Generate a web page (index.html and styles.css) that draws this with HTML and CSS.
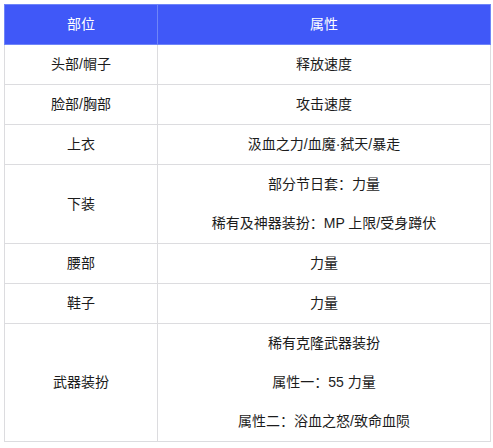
FILE: index.html
```html
<!DOCTYPE html>
<html lang="zh">
<head>
<meta charset="utf-8">
<link rel="stylesheet" href="styles.css">
</head>
<body>
<table class="gear">
  <thead>
    <tr><th class="col-part">部位</th><th class="col-attr">属性</th></tr>
  </thead>
  <tbody>
    <tr><td>头部/帽子</td><td>释放速度</td></tr>
    <tr><td>脸部/胸部</td><td>攻击速度</td></tr>
    <tr><td>上衣</td><td>汲血之力/血魔·弑天/暴走</td></tr>
    <tr><td>下装</td><td><div class="line">部分节日套：力量</div><div class="line">稀有及神器装扮：MP 上限/受身蹲伏</div></td></tr>
    <tr><td>腰部</td><td>力量</td></tr>
    <tr><td>鞋子</td><td>力量</td></tr>
    <tr class="last"><td>武器装扮</td><td><div class="line">稀有克隆武器装扮</div><div class="line">属性一：55 力量</div><div class="line">属性二：浴血之怒/致命血陨</div></td></tr>
  </tbody>
</table>
</body>
</html>
```

FILE: styles.css
```css
html, body {
  margin: 0;
  padding: 0;
  background: #ffffff;
}
body {
  padding: 4px 0 0 4px;
  font-family: "Liberation Sans", "Noto Sans CJK SC", sans-serif;
  font-size: 14px;
  color: #1c1c1c;
}
.gear {
  border-collapse: collapse;
  width: 485px;
  table-layout: fixed;
}
.gear th, .gear td {
  border: 1px solid #dcdcdf;
  text-align: center;
  padding: 0;
  font-weight: normal;
  line-height: 39px;
}
.gear th {
  background: #4058f8;
  color: #ffffff;
  height: 39px;
  line-height: 39px;
  border-color: #6f85f8;
}
.col-part { width: 152px; }
.col-attr { width: 332px; }
.gear td .line {
  line-height: 39px;
}
```
